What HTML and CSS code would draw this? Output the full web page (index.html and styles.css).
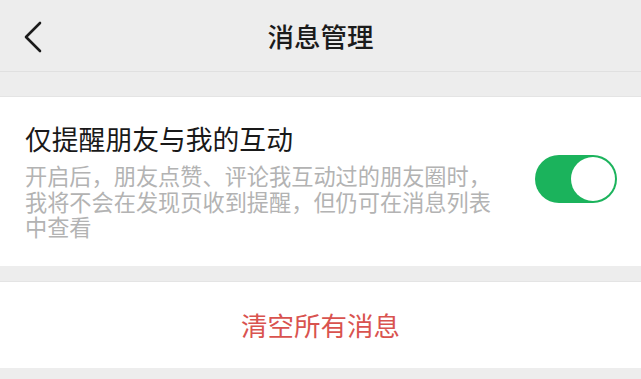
FILE: index.html
```html
<!DOCTYPE html>
<html lang="zh-CN">
<head>
<meta charset="utf-8">
<title>消息管理</title>
<link rel="stylesheet" href="styles.css">
</head>
<body>
<div class="page">
  <header class="nav">
    <span class="nav-back">
      <svg width="20" height="32" viewBox="0 0 20 32"><polyline points="16,2 2,16 16,30" fill="none" stroke="#1b1b1b" stroke-width="2.6" stroke-linecap="round" stroke-linejoin="round"/></svg>
    </span>
    <h1 class="nav-title">消息管理</h1>
  </header>
  <section class="group">
    <div class="cell">
      <div class="cell-text">
        <div class="cell-title">仅提醒朋友与我的互动</div>
        <div class="cell-desc">开启后，朋友点赞、评论我互动过的朋友圈时，我将不会在发现页收到提醒，但仍可在消息列表中查看</div>
      </div>
      <div class="switch"><span class="switch-knob"></span></div>
    </div>
  </section>
  <section class="group group-gap">
    <div class="action">清空所有消息</div>
  </section>
</div>
</body>
</html>
```
FILE: styles.css
```css
html, body {
  margin: 0;
  padding: 0;
}
body {
  background: #ededed;
  font-family: "Noto Sans CJK SC", "Noto Sans", sans-serif;
  color: #1a1a1a;
  width: 641px;
  height: 379px;
  overflow: hidden;
}
.nav {
  height: 71px;
  border-bottom: 1px solid #e0e0e0;
  display: flex;
  align-items: center;
  justify-content: center;
  position: relative;
}
.nav-back {
  position: absolute;
  left: 24px;
  top: 21px;
  display: flex;
}
.nav-title {
  margin: 0;
  font-size: 26.5px;
  font-weight: 500;
  line-height: 36px;
  color: #1b1b1b;
}
.group {
  margin-top: 24px;
  background: #fff;
  border-top: 1px solid #e4e4e4;
}
.group-gap {
  margin-top: 15px;
}
.cell {
  display: flex;
  align-items: center;
  padding: 25px 24px 26px 25px;
}
.cell-text {
  flex: 1;
}
.cell-title {
  font-size: 26.8px;
  line-height: 34px;
  color: #191919;
}
.cell-desc {
  margin-top: 7px;
  width: 470px;
  font-size: 22.2px;
  line-height: 25.5px;
  color: #b3b3b3;
}
.switch {
  width: 82px;
  height: 48px;
  border-radius: 24px;
  background: #1bb35c;
  position: relative;
  margin-top: -4px;
  flex: none;
}
.switch-knob {
  position: absolute;
  right: 2px;
  top: 2px;
  width: 44px;
  height: 44px;
  border-radius: 50%;
  background: #fff;
}
.action {
  height: 86px;
  display: flex;
  align-items: center;
  justify-content: center;
  font-size: 26.5px;
  color: #d9534f;
}
```
